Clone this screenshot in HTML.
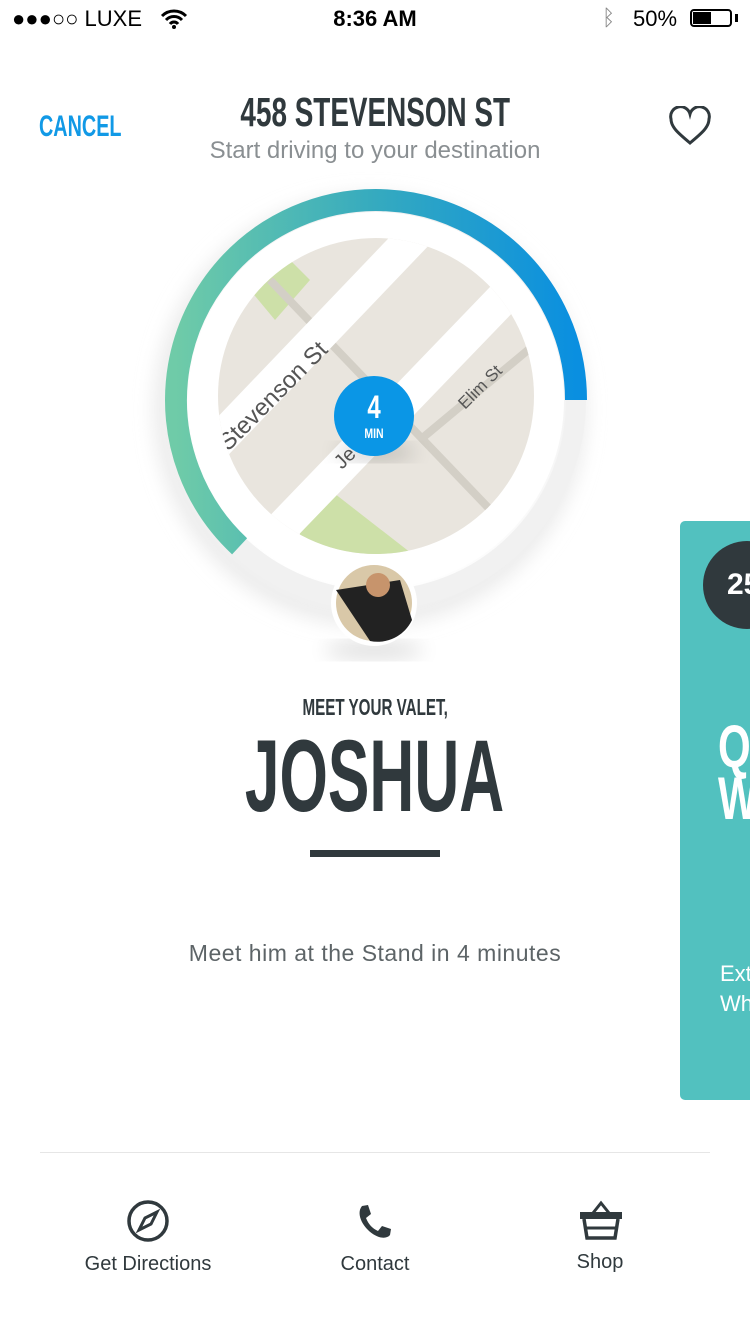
<!DOCTYPE html>
<html><head><meta charset="utf-8"><style>
body{margin:0;width:750px;height:1334px;background:#fff;position:relative;overflow:hidden;font-family:"Liberation Sans",sans-serif;color:#30393d}
.abs{position:absolute}
.c{font-family:"Liberation Sans",sans-serif;font-weight:bold;display:inline-block;white-space:nowrap}
.ctr{left:0;width:750px;text-align:center}
</style></head><body>
<div class="abs" style="left:12px;top:6px;font-size:22px;color:#000">●●●○○ LUXE</div>
<svg class="abs" style="left:160px;top:8px" width="28" height="22" viewBox="0 0 28 22"><path d="M2 8a17 17 0 0 1 24 0M6 12a11 11 0 0 1 16 0M10 16a5 5 0 0 1 8 0" stroke="#000" stroke-width="3" fill="none"/><circle cx="14" cy="19" r="2" fill="#000"/></svg>
<div class="abs ctr" style="top:6px;font-size:22px;font-weight:bold;color:#000">8:36 AM</div>
<div class="abs" style="left:602px;top:5px;font-size:22px;color:#888">&#x16D2;</div>
<div class="abs" style="left:633px;top:6px;font-size:22px;color:#000">50%</div>
<div class="abs" style="left:690px;top:9px;width:42px;height:18px;border:2px solid #000;border-radius:4px;box-sizing:border-box"><div style="width:18px;height:12px;background:#000;margin:1px"></div></div>
<div class="abs" style="left:735px;top:14px;width:3px;height:8px;background:#000"></div>

<div class="abs" style="left:39px;top:110px"><span class="c" style="font-size:30px;color:#1199e6;transform:scaleX(0.66);transform-origin:0 0">CANCEL</span></div>
<div class="abs ctr" style="top:89px"><span class="c" style="font-size:41px;transform:scaleX(0.68)">458 STEVENSON ST</span></div>
<div class="abs ctr" style="top:137px;font-size:24px;color:#8a8f92">Start driving to your destination</div>
<svg class="abs" style="left:668px;top:106px" width="44" height="40" viewBox="0 0 44 40"><path d="M22 37 C10 27 3 21 3 13 A9.5 9.5 0 0 1 22 8 A9.5 9.5 0 0 1 41 13 C41 21 34 27 22 37Z" fill="none" stroke="#30393d" stroke-width="3"/></svg>

<svg class="abs" style="left:0;top:0" width="750" height="700">
<defs>
<linearGradient id="g" x1="0" y1="0" x2="1" y2="0"><stop offset="0" stop-color="#6fcba8"/><stop offset="0.5" stop-color="#35aabf"/><stop offset="1" stop-color="#0a8fe0"/></linearGradient>
<clipPath id="c"><circle cx="376" cy="396" r="158"/></clipPath>
<filter id="s" x="-20%" y="-20%" width="140%" height="140%"><feGaussianBlur stdDeviation="10"/></filter>
</defs>
<circle cx="370" cy="410" r="205" fill="none" stroke="#e6e6e6" stroke-width="18" filter="url(#s)"/>
<circle cx="376" cy="400" r="200" fill="none" stroke="#f1f1f1" stroke-width="20"/>
<circle cx="376" cy="400" r="188" fill="#fff"/>
<path d="M239.6 546.3 A200 200 0 1 1 576 400" fill="none" stroke="url(#g)" stroke-width="22"/>
<g clip-path="url(#c)">
<rect x="210" y="230" width="340" height="340" fill="#e9e5de"/>
<polygon points="250,290 290,260 310,280 275,320" fill="#cde0a8"/>
<polygon points="300,500 330,490 420,560 300,560" fill="#cde0a8"/>
<line x1="270" y1="280" x2="500" y2="520" stroke="#d3cfc6" stroke-width="8"/>
<line x1="420" y1="440" x2="540" y2="340" stroke="#d3cfc6" stroke-width="8"/>
<line x1="200" y1="460" x2="420" y2="230" stroke="#fff" stroke-width="34"/>
<line x1="270" y1="540" x2="530" y2="270" stroke="#fff" stroke-width="34"/>
<text transform="translate(228,452) rotate(-45)" font-size="24" fill="#555" font-family="Liberation Sans">Stevenson St</text>
<text transform="translate(465,410) rotate(-45)" font-size="17" fill="#555" font-family="Liberation Sans">Elim St</text>
<text transform="translate(342,470) rotate(-45)" font-size="20" fill="#555" font-family="Liberation Sans">Je</text>
</g>
<ellipse cx="376" cy="452" rx="40" ry="8" fill="#000" opacity="0.2" filter="url(#s)"/>
<circle cx="374" cy="416" r="40" fill="#0a96e6"/>
<text x="374" y="418" text-anchor="middle" font-size="32" fill="#fff" font-weight="bold" font-family="Liberation Sans" transform="translate(374 0) scale(0.75 1) translate(-374 0)">4</text>
<text x="374" y="438" text-anchor="middle" font-size="14" fill="#fff" font-weight="bold" font-family="Liberation Sans" transform="translate(374 0) scale(0.75 1) translate(-374 0)">MIN</text>
<ellipse cx="374" cy="650" rx="50" ry="8" fill="#000" opacity="0.15" filter="url(#s)"/>
<circle cx="374" cy="603" r="43" fill="#fff"/>
<circle cx="374" cy="603" r="38" fill="#d9c8a8"/>
<path d="M336 590 L400 580 L412 620 A38 38 0 0 1 370 641 Z" fill="#222"/>
<circle cx="378" cy="585" r="12" fill="#c7946c"/>
</svg>

<div class="abs ctr" style="top:694px"><span class="c" style="font-size:23px;transform:scaleX(0.66)">MEET YOUR VALET,</span></div>
<div class="abs ctr" style="top:718px"><span class="c" style="font-size:102px;transform:scaleX(0.61)">JOSHUA</span></div>
<div class="abs" style="left:310px;top:850px;width:130px;height:7px;background:#30393d"></div>
<div class="abs ctr" style="top:940px;font-size:23px;color:#5d6467;letter-spacing:0.5px">Meet him at the Stand in 4 minutes</div>

<div class="abs" style="left:680px;top:521px;width:80px;height:579px;background:#52c1bf;border-radius:5px;overflow:hidden">
<div class="abs" style="left:23px;top:20px;width:88px;height:88px;border-radius:50%;background:#30393d;color:#fff;font-size:30px;font-weight:bold;line-height:88px;text-indent:24px">25</div>
<div class="abs" style="left:38px;top:200px;font-size:60px;font-weight:bold;color:#fff;line-height:52px;transform:scaleX(0.7);transform-origin:0 0">Q<br>W</div>
<div class="abs" style="left:40px;top:438px;font-size:22px;color:#fff;line-height:30px">Ext<br>Wh</div>
</div>

<div class="abs" style="left:40px;top:1152px;width:670px;height:1px;background:#e6e6e6"></div>
<svg class="abs" style="left:126px;top:1199px" width="44" height="44" viewBox="0 0 44 44"><circle cx="22" cy="22" r="19" fill="none" stroke="#30393d" stroke-width="3.5"/><path d="M31 13 L25 25 L13 31 L19 19Z" fill="none" stroke="#30393d" stroke-width="3"/></svg>
<div class="abs" style="left:48px;width:200px;text-align:center;top:1253px;font-size:20px">Get Directions</div>
<svg class="abs" style="left:354px;top:1202px" width="40" height="40" viewBox="0 0 40 40"><path d="M8 4 L14 3 L17 12 L12 16 C15 23 18 26 24 29 L28 24 L37 27 L36 33 C32 38 22 36 14 28 C6 20 3 10 8 4Z" fill="#30393d"/></svg>
<div class="abs" style="left:275px;width:200px;text-align:center;top:1253px;font-size:20px">Contact</div>
<svg class="abs" style="left:578px;top:1200px" width="46" height="42" viewBox="0 0 46 42"><path d="M15 13 L23 3 L31 13" fill="none" stroke="#30393d" stroke-width="3"/><rect x="2" y="12" width="42" height="7" fill="#30393d"/><path d="M6 19 L9 38 L37 38 L40 19" fill="none" stroke="#30393d" stroke-width="3.5"/><line x1="8" y1="28" x2="38" y2="28" stroke="#30393d" stroke-width="3"/></svg>
<div class="abs" style="left:500px;width:200px;text-align:center;top:1251px;font-size:20px">Shop</div>
</body></html>
